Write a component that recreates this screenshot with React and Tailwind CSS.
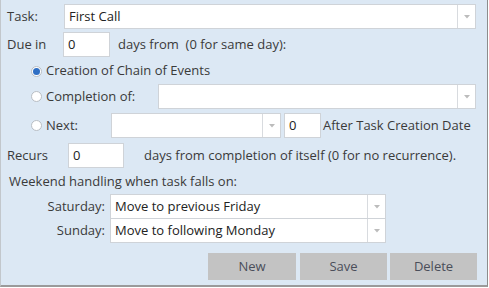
const font = { fontFamily: '"Open Sans", "Liberation Sans", sans-serif' };

function Arrow() {
    return (
        <svg width="6" height="4" viewBox="0 0 6 4" className="block">
            <path d="M0 0 L6 0 L3 3.5 Z" fill="#bcbcbc" />
        </svg>
    );
}

function Select({ value, className }) {
    return (
        <div className={`flex h-[25px] bg-white border border-[#cfd3d8] ${className}`}>
            <div className="flex-1 flex items-center pl-[4px] text-[13px] text-[#222] whitespace-nowrap overflow-hidden">{value}</div>
            <div className="w-[18px] flex items-center justify-center border-l border-[#d8dbdf]">
                <Arrow />
            </div>
        </div>
    );
}

function Input({ value, className }) {
    return (
        <div className={`flex items-center h-[25px] bg-white border border-[#cfd3d8] pl-[4px] text-[13px] text-[#222] ${className}`}>{value}</div>
    );
}

function Radio({ checked }) {
    return (
        <div className="w-[11px] h-[11px] rounded-full border border-[#b9bec4] bg-white flex items-center justify-center">
            {checked && <div className="w-[7px] h-[7px] rounded-full bg-[#2f6fc4]" />}
        </div>
    );
}

export default function App() {
    return (
        <div style={font} className="w-[489px] h-[288px] bg-white">
            <div className="w-[488px] h-[287px] bg-[#dce8f4] border-l border-[#c2c7cc] border-r border-r-[#8c8c8c] border-b-2 border-b-[#9a9a9a] text-[13px] text-[#3a3a3a] flex flex-col">
                <div className="flex items-center mt-[4px] h-[25px]">
                    <span className="w-[63px] pl-[6px]">Task:</span>
                    <Select value="First Call" className="w-[412px]" />
                </div>
                <div className="flex items-center mt-[3px] h-[25px]">
                    <span className="w-[62px] pl-[6px]">Due in</span>
                    <Input value="0" className="w-[47px]" />
                    <span className="ml-[8px]">days from&nbsp; (0 for same day):</span>
                </div>
                <div className="flex items-center mt-[3px] h-[22px] pl-[30px]">
                    <Radio checked />
                    <span className="ml-[4px]">Creation of Chain of Events</span>
                </div>
                <div className="flex items-center mt-[2px] h-[25px] pl-[30px]">
                    <Radio />
                    <span className="ml-[4px] w-[112px]">Completion of:</span>
                    <Select value="" className="w-[318px]" />
                </div>
                <div className="flex items-center mt-[4px] h-[25px] pl-[30px]">
                    <Radio />
                    <span className="ml-[4px] w-[65px]">Next:</span>
                    <Select value="" className="w-[170px]" />
                    <Input value="0" className="w-[37px] ml-[3px]" />
                    <span className="ml-[2px]">After Task Creation Date</span>
                </div>
                <div className="flex items-center mt-[5px] h-[25px]">
                    <span className="w-[67px] pl-[6px]">Recurs</span>
                    <Input value="0" className="w-[56px]" />
                    <span className="ml-[20px]">days from completion of itself (0 for no recurrence).</span>
                </div>
                <div className="flex items-center mt-[5px] h-[18px] pl-[8px]">
                    Weekend handling when task falls on:
                </div>
                <div className="flex items-center mt-[3px] h-[25px]">
                    <span className="w-[109px] text-right pr-[5px]">Saturday:</span>
                    <Select value="Move to previous Friday" className="w-[276px]" />
                </div>
                <div className="flex items-center -mt-px h-[25px]">
                    <span className="w-[109px] text-right pr-[5px]">Sunday:</span>
                    <Select value="Move to following Monday" className="w-[276px]" />
                </div>
                <div className="flex justify-end mt-[10px] pr-[10px]">
                    <div className="w-[88px] h-[27px] bg-[#c3c3c3] flex items-center justify-center text-[#4a4e5a]">New</div>
                    <div className="w-[87px] h-[27px] ml-[4px] bg-[#c3c3c3] flex items-center justify-center text-[#4a4e5a]">Save</div>
                    <div className="w-[87px] h-[27px] ml-[3px] bg-[#c3c3c3] flex items-center justify-center text-[#4a4e5a]">Delete</div>
                </div>
            </div>
        </div>
    );
}
